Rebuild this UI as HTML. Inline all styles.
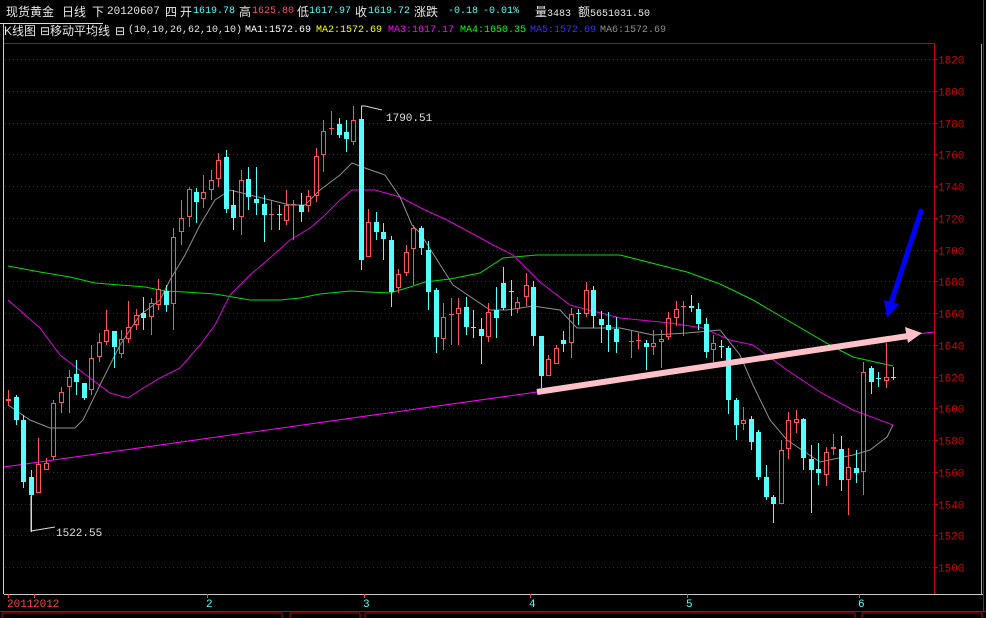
<!DOCTYPE html>
<html><head><meta charset="utf-8"><style>
html,body{margin:0;padding:0;background:#000;}
#w{position:relative;width:986px;height:618px;overflow:hidden;background:#000;font-family:"Liberation Mono","Noto Sans CJK SC",monospace;font-size:10px;}
.t{position:absolute;white-space:nowrap;line-height:14px;}
.c{color:#e8e8e8;font-family:"Liberation Sans","Noto Sans CJK SC",sans-serif;font-size:12px;}
.cy{color:#54ffff}.rd{color:#ff5454}.wh{color:#fff}.ye{color:#ffff00}.mg{color:#ff00ff}.gr{color:#00ff00}.bl{color:#3030ff}.gy{color:#8c8c8c}
svg{position:absolute;left:0;top:0;}
</style></head><body><div id="w">
<svg id="s" width="986" height="618" xmlns="http://www.w3.org/2000/svg"></svg>
<div class="t c" style="left:6px;top:5px">现货黄金</div>
<div class="t c" style="left:62px;top:5px">日线</div>
<div class="t c" style="left:92px;top:5px">下</div>
<div class="t" style="left:107px;top:5px;color:#e8e8e8;font-size:11px">20120607</div>
<div class="t c" style="left:165px;top:5px">四</div>
<div class="t c" style="left:180px;top:5px">开</div><div class="t cy" style="left:193px;top:5px">1619.78</div>
<div class="t c" style="left:239px;top:5px">高</div><div class="t rd" style="left:252px;top:5px">1625.80</div>
<div class="t c" style="left:297px;top:5px">低</div><div class="t cy" style="left:309px;top:5px">1617.97</div>
<div class="t c" style="left:355px;top:5px">收</div><div class="t cy" style="left:368px;top:5px">1619.72</div>
<div class="t c" style="left:414px;top:5px">涨跌</div>
<div class="t cy" style="left:448px;top:5px">-0.18</div><div class="t cy" style="left:483px;top:5px">-0.01%</div>
<div class="t c" style="left:535px;top:5px">量<span style="font-family:'Liberation Mono';font-size:10px">3483</span></div>
<div class="t c" style="left:578px;top:5px">额<span style="font-family:'Liberation Mono';font-size:10px">5651031.50</span></div>

<div class="t c" style="left:4px;top:24px">K线图</div>
<div class="t c" style="left:40px;top:24px">⊟移动平均线</div>
<div class="t c" style="left:115px;top:24px">⊟</div>
<div class="t" style="left:128px;top:24px;color:#e8e8e8">(10,10,26,62,10,10)</div>
<div class="t wh" style="left:245px;top:24px">MA1:1572.69</div>
<div class="t ye" style="left:316px;top:24px">MA2:1572.69</div>
<div class="t mg" style="left:388px;top:24px">MA3:1617.17</div>
<div class="t gr" style="left:460px;top:24px">MA4:1650.35</div>
<div class="t bl" style="left:530px;top:24px">MA5:1572.69</div>
<div class="t gy" style="left:600px;top:24px">MA6:1572.69</div>
</div>
<script>
var s=document.getElementById('s'),h='';
function L(x1,y1,x2,y2,c,w,e){h+='<line x1="'+x1+'" y1="'+y1+'" x2="'+x2+'" y2="'+y2+'" stroke="'+c+'" stroke-width="'+(w||1)+'" '+(e||'')+'/>';}
L(0,23.5,103,23.5,'#ddd');L(3.5,23,3.5,594,'#ccc');
L(4,43.5,935,43.5,'#d00000');L(934.5,43,934.5,594,'#d00000');
L(4,594.5,983,594.5,'#c8c8c8');L(983.5,0,983.5,611,'#d00000');L(981.5,44,981.5,594,'#aaa');
L(0,611.5,986,611.5,'#d00000');
h+='<rect x="2" y="613" width="280" height="6" fill="none" stroke="#c00000"/><rect x="290" y="613" width="70" height="6" fill="none" stroke="#c00000"/><rect x="365" y="613" width="490" height="6" fill="none" stroke="#c00000"/><rect x="862" y="613" width="120" height="6" fill="none" stroke="#c00000"/>';
for(var p=1820;p>=1500;p-=20){var y=Math.round(59+(1820-p)*1.5875)+.5;L(5,y,934,y,'#a00000',1,'stroke-dasharray="1 3"');L(934,y,938,y,'#d00000');
h+='<text x="938" y="'+(y+4)+'" fill="#d00000" font-family="Liberation Mono" font-size="11">'+p+'</text>';}
[[7,'2011','#ff4040'],[33,'2012','#ff4040'],[206,'2','#54ffff'],[363,'3','#54ffff'],[529,'4','#54ffff'],[686,'5','#54ffff'],[858,'6','#54ffff']].forEach(function(a){h+='<text x="'+a[0]+'" y="607" fill="'+a[2]+'" font-family="Liberation Mono" font-size="11">'+a[1]+'</text>';L(a[0]+1.5,594,a[0]+1.5,598,'#ff4040');});
function pl(pts,c,w){h+='<polyline points="'+pts+'" fill="none" stroke="'+c+'" stroke-width="'+(w||1)+'"/>';}
pl('4,467 537,392','#ff00ff');pl('918,334 934,332','#ff00ff');
pl('8,266 40,272 70,277 95,283 120,285 145,287 165,291 185,292 215,294 250,300 280,300 300,298 320,294 350,291 390,293 410,287 425,282 450,279 480,273 503,258 537,255 620,255 687,272 720,284 753,300 787,320 830,345 853,357 893,366','#00e000');
pl('8,300 40,328 60,355 90,378 110,393 128,398 140,390 160,378 180,368 200,345 215,325 230,295 250,275 270,258 290,240 310,228 325,215 340,200 352,190 375,190 400,197 425,210 447,220 497,247 513,255 540,282 570,305 620,318 670,323 703,328 730,340 753,345 787,370 820,392 853,410 893,425','#e000e0');
pl('8,405 30,420 50,428 75,428 83,420 100,385 120,345 140,315 160,300 170,280 185,255 200,225 215,200 230,190 250,195 270,200 290,205 305,205 320,190 340,175 352,163 365,168 385,175 400,197 412,225 420,233 453,285 490,310 507,310 533,306 560,310 577,328 620,328 653,335 687,333 720,330 740,355 753,385 770,420 787,440 820,462 853,455 870,450 887,437 893,425','#909090');
var C=[[8,390,399,401,405,1],[16,395,397,420,425,0],[23,415,420,482,488,0],[31,470,477,495,532,0],[38,438,464,493,493,1],[46,458,463,470,470,1],[53,400,403,457,460,1],[61,387,392,403,413,1],[69,370,377,387,413,1],[76,360,374,382,395,0],[84,383,383,398,400,0],[91,345,358,390,395,1],[99,333,342,357,362,1],[106,310,330,342,345,1],[114,331,331,347,368,0],[121,330,339,354,358,1],[128,301,327,339,343,1],[136,309,315,325,330,1],[143,297,313,318,330,0],[151,298,303,317,335,1],[158,279,289,305,310,1],[166,285,291,305,312,0],[173,228,237,304,330,1],[181,200,218,232,245,1],[189,187,189,217,227,1],[196,188,192,202,223,0],[203,175,192,199,208,1],[211,170,180,190,200,1],[218,153,160,179,187,1],[226,150,157,209,213,0],[233,190,205,218,230,0],[241,170,180,217,235,1],[248,167,179,197,210,0],[256,167,199,203,215,0],[264,195,204,215,242,0],[271,200,214,215,230,1],[279,205,214,215,230,0],[286,190,205,221,225,1],[293,200,204,205,240,1],[301,193,205,212,222,0],[308,190,196,206,212,1],[316,148,156,196,202,1],[323,120,131,155,172,1],[331,111,128,129,135,1],[339,118,124,135,138,0],[346,120,132,139,152,0],[353,106,120,142,145,1],[361,106,119,260,270,0],[368,209,222,257,257,1],[376,212,222,232,240,0],[383,223,232,239,260,0],[391,236,240,292,307,0],[398,269,274,288,293,1],[406,245,252,273,276,1],[413,225,228,249,285,1],[421,226,228,248,255,0],[428,241,250,292,310,0],[436,288,290,337,353,0],[443,303,317,339,350,1],[451,298,314,315,345,1],[458,298,308,314,345,1],[466,297,307,327,335,0],[473,310,327,328,338,0],[481,318,329,336,364,0],[488,303,312,337,342,1],[496,287,310,318,338,0],[503,267,283,308,310,0],[511,280,291,292,316,0],[517,297,302,309,313,1],[526,273,285,297,306,1],[533,281,287,336,346,0],[541,336,336,376,388,0],[548,355,359,376,376,1],[556,345,348,364,364,1],[563,331,340,344,352,0],[571,308,314,343,358,1],[578,309,313,314,325,0],[586,282,290,314,317,1],[593,286,290,316,328,0],[601,311,319,325,343,0],[608,312,325,330,352,0],[616,317,329,342,353,0],[631,330,341,342,358,1],[638,333,340,341,349,1],[646,340,343,347,370,0],[653,330,343,347,355,1],[661,330,339,342,368,1],[668,312,318,337,340,1],[676,301,309,318,326,1],[683,301,306,307,336,1],[691,295,306,308,312,0],[698,303,309,324,330,0],[706,318,324,352,358,0],[713,335,343,350,362,1],[721,340,346,347,358,0],[728,346,348,400,414,0],[736,398,400,425,440,0],[743,407,420,424,430,1],[751,416,419,442,450,0],[758,430,432,477,480,0],[766,465,477,497,500,0],[773,495,497,504,523,0],[781,440,450,504,504,1],[788,412,420,449,459,1],[796,410,419,423,433,1],[803,418,419,458,470,0],[811,445,459,470,513,0],[818,443,469,473,485,0],[826,447,452,475,486,1],[833,434,447,449,455,1],[841,436,449,480,491,0],[848,448,467,480,515,1],[856,450,468,473,483,0],[863,362,372,472,495,1],[871,366,368,382,394,0],[878,372,378,379,387,0],[886,343,377,381,388,1],[893,367,377,378,380,0]];
C.forEach(function(c){var x=c[0],col=c[5]?'#ff5454':'#54ffff';
L(x+.5,c[1],x+.5,c[2],col);L(x+.5,c[3],x+.5,c[4],col);
var bh=c[3]-c[2];
if(bh<2){L(x-2,c[2]+.5,x+3,c[2]+.5,col);}
else if(c[5]){h+='<rect x="'+(x-1.5)+'" y="'+(c[2]+.5)+'" width="4" height="'+(bh-1)+'" fill="none" stroke="'+col+'"/>';}
else{h+='<rect x="'+(x-2)+'" y="'+c[2]+'" width="5" height="'+bh+'" fill="'+col+'"/>';}
});
pl('361,106 365,106 382,110','#ddd');h+='<text x="386" y="121" fill="#e0e0e0" font-family="Liberation Mono" font-size="11">1790.51</text>';
pl('31,496 31,531 55,527','#ddd');h+='<text x="56" y="536" fill="#e0e0e0" font-family="Liberation Mono" font-size="11">1522.55</text>';
L(537,392,908,336,'#ffc0c8',6);
h+='<polygon points="922,333 905,327 908,343" fill="#ffc0c8"/>';
L(921,211,891,303,'#0000ff',5,'stroke-linecap="round"');
h+='<polygon points="887,318 884,300 899,304" fill="#0000ff"/>';
s.innerHTML=h;
</script>
</body></html>
